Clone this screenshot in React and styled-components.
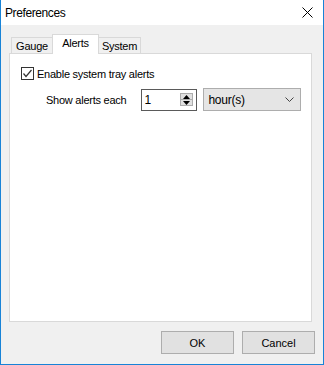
import React, { useState } from "react";
import styled, { createGlobalStyle } from "styled-components";

const Global = createGlobalStyle`
  * { box-sizing: border-box; }
  body { margin: 0; background: #fff; }
`;

const Window = styled.div`
  width: 324px;
  height: 365px;
  border: 1px solid #1883d7;
  border-top: none;
  background: #f0f0f0;
  display: flex;
  flex-direction: column;
  font-family: "Liberation Sans", Arial, sans-serif;
  font-size: 11px;
  letter-spacing: -0.25px;
  color: #000;
`;

const TitleBar = styled.div`
  height: 25px;
  background: #fff;
  display: flex;
  align-items: center;
  justify-content: space-between;
  padding: 0 10px 0 4px;
  font-size: 12px;
  letter-spacing: -0.4px;
`;

const Body = styled.div`
  flex: 1;
  display: flex;
  flex-direction: column;
  padding: 9px 11px 0 8px;
`;

const TabRow = styled.div`
  display: flex;
  align-items: flex-end;
  margin-left: 2px;
  margin-bottom: -1px;
  position: relative;
  z-index: 1;
`;

const Tab = styled.div`
  width: ${p => p.$w}px;
  height: ${p => (p.$active ? 20 : 17)}px;
  border: 1px solid #d9d9d9;
  border-bottom: ${p => (p.$active ? "none" : "1px solid #d9d9d9")};
  background: ${p => (p.$active ? "#fff" : "#f0f0f0")};
  display: flex;
  align-items: center;
  justify-content: center;
  padding-bottom: ${p => (p.$active ? 3 : 0)}px;
  margin-left: ${p => (p.$first ? 0 : -1)}px;
`;

const Panel = styled.div`
  flex: 1;
  background: #fff;
  border: 1px solid #d9d9d9;
  padding: 13px 10px 0 11px;
  display: flex;
  flex-direction: column;
`;

const CheckRow = styled.label`
  display: flex;
  align-items: center;
  gap: 3px;
`;

const Box = styled.span`
  width: 13px;
  height: 13px;
  border: 1px solid #333;
  background: #fff;
  display: flex;
  align-items: center;
  justify-content: center;
`;

const AlertRow = styled.div`
  display: flex;
  align-items: center;
  margin-top: 8px;
  padding-left: 25px;
`;

const Label = styled.span`
  width: 95px;
`;

const Spin = styled.div`
  width: 57px;
  height: 22px;
  border: 1px solid #5a5a5a;
  background: #fff;
  display: flex;
  align-items: center;
  justify-content: space-between;
  padding: 0 3px 0 3px;
  font-size: 12px;
`;

const SpinBtns = styled.div`
  display: flex;
  flex-direction: column;
  width: 13px;
`;

const SpinBtn = styled.div`
  height: 7px;
  background: #e1e1e1;
  border: 1px solid #adadad;
  display: flex;
  align-items: center;
  justify-content: center;
  margin-top: ${p => (p.$down ? -1 : 0)}px;
`;

const Combo = styled.div`
  width: 98px;
  height: 23px;
  margin-left: 6px;
  background: #e5e5e5;
  border: 1px solid #adadad;
  display: flex;
  align-items: center;
  justify-content: space-between;
  padding: 0 6px 0 4px;
  font-size: 12px;
`;

const Footer = styled.div`
  display: flex;
  justify-content: flex-end;
  gap: 8px;
  padding: 9px 0 10px 0;
  margin-right: -3px;
`;

const Button = styled.button`
  width: 73px;
  height: 23px;
  background: #e1e1e1;
  border: 1px solid #adadad;
  font-family: "Liberation Sans", Arial, sans-serif;
  font-size: 11px;
  color: #000;
  padding: 0;
`;

export default function App() {
  const [tab] = useState("Alerts");
  const tabs = [["Gauge", 42], ["Alerts", 47], ["System", 43]];
  return (
    <>
      <Global />
      <Window>
        <TitleBar>
          <span>Preferences</span>
          <svg width="11" height="11" viewBox="0 0 11 11">
            <path d="M0.5 0.5 L10.5 10.5 M10.5 0.5 L0.5 10.5" stroke="#000" strokeWidth="1" />
          </svg>
        </TitleBar>
        <Body>
          <TabRow>
            {tabs.map(([name, w], i) => (
              <Tab key={name} $w={w} $first={i === 0} $active={name === tab}>
                {name}
              </Tab>
            ))}
          </TabRow>
          <Panel>
            <CheckRow>
              <Box>
                <svg width="11" height="11" viewBox="0 0 11 11">
                  <path d="M1.5 5.5 L4 8.5 L9.5 2" stroke="#333" strokeWidth="1.2" fill="none" />
                </svg>
              </Box>
              Enable system tray alerts
            </CheckRow>
            <AlertRow>
              <Label>Show alerts each</Label>
              <Spin>
                <span>1</span>
                <SpinBtns>
                  <SpinBtn>
                    <svg width="7" height="4" viewBox="0 0 7 4"><path d="M0 4 L3.5 0 L7 4 Z" fill="#000" /></svg>
                  </SpinBtn>
                  <SpinBtn $down>
                    <svg width="7" height="4" viewBox="0 0 7 4"><path d="M0 0 L3.5 4 L7 0 Z" fill="#000" /></svg>
                  </SpinBtn>
                </SpinBtns>
              </Spin>
              <Combo>
                <span>hour(s)</span>
                <svg width="9" height="5" viewBox="0 0 9 5">
                  <path d="M0.5 0.5 L4.5 4.5 L8.5 0.5" stroke="#444" strokeWidth="1" fill="none" />
                </svg>
              </Combo>
            </AlertRow>
          </Panel>
          <Footer>
            <Button>OK</Button>
            <Button>Cancel</Button>
          </Footer>
        </Body>
      </Window>
    </>
  );
}
